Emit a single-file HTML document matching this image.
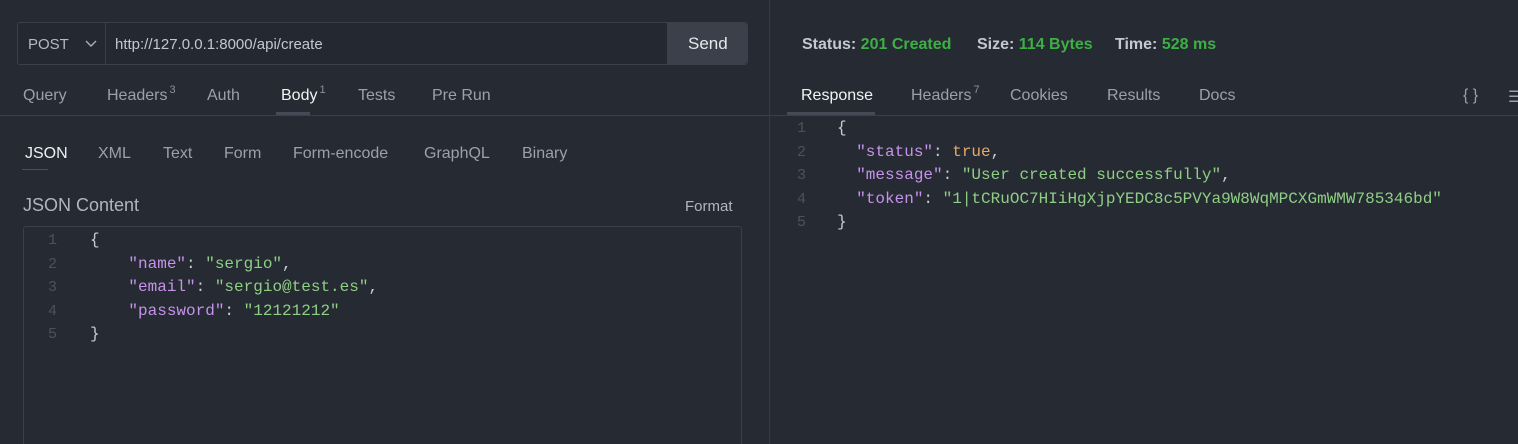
<!DOCTYPE html>
<html><head><style>
*{margin:0;padding:0;box-sizing:border-box}
html,body{width:1518px;height:444px;overflow:hidden}
body{background:#262a33;font-family:"Liberation Sans",sans-serif;color:#a6acb6;position:relative}
.a{position:absolute;white-space:nowrap}
.t{font-size:16px;color:#9aa1ab}
.mono{font-family:"Liberation Mono",monospace;font-size:16px;white-space:pre}
.mono div{white-space:pre}
.ln{color:#4c525d;font-family:"Liberation Mono",monospace;font-size:15px}
.k{color:#c792ea}.s{color:#8fcf85}.p{color:#c9ccd2}.b{color:#e8a86a}
sup{font-size:11px;vertical-align:top;position:relative;top:-3px;margin-left:2px;color:#8a919c}
</style></head><body>
<div class="a" style="left:769px;top:0;width:1px;height:444px;background:#353a44"></div>
<div class="a" style="left:17px;top:22px;width:731px;height:43px;border:1px solid #3a3f49;border-radius:3px;background:#242831"></div>
<div class="a" style="left:105px;top:23px;width:1px;height:41px;background:#3a3f49"></div>
<div class="a t" style="left:28px;top:36px;font-size:15px;color:#b4bac3">POST</div>
<svg class="a" style="left:85px;top:40px" width="12" height="8"><path d="M1 1l5 5 5-5" stroke="#aab0ba" stroke-width="1.4" fill="none"/></svg>
<div class="a t" style="left:115px;top:36px;font-size:15px;color:#c3c8cf">http://127.0.0.1:8000/api/create</div>
<div class="a" style="left:667px;top:23px;width:80px;height:41px;background:#3b404a;border-radius:0 3px 3px 0"></div>
<div class="a" style="left:688px;top:34px;font-size:17px;color:#e6e8eb">Send</div>
<div class="a t" style="left:23px;top:87px">Query</div>
<div class="a t" style="left:107px;top:87px">Headers<sup>3</sup></div>
<div class="a t" style="left:207px;top:87px">Auth</div>
<div class="a t" style="left:281px;top:87px;color:#f2f3f5">Body<sup>1</sup></div>
<div class="a t" style="left:358px;top:87px">Tests</div>
<div class="a t" style="left:432px;top:87px">Pre Run</div>
<div class="a" style="left:0;top:115px;width:769px;height:1px;background:#3a3f49"></div>
<div class="a" style="left:276px;top:112px;width:34px;height:3px;background:#454b56"></div>
<div class="a t" style="left:25px;top:145px;color:#eef0f2">JSON</div>
<div class="a" style="left:22px;top:169px;width:26px;height:1px;background:#4a505b"></div>
<div class="a t" style="left:98px;top:145px">XML</div>
<div class="a t" style="left:163px;top:145px">Text</div>
<div class="a t" style="left:224px;top:145px">Form</div>
<div class="a t" style="left:293px;top:145px">Form-encode</div>
<div class="a t" style="left:424px;top:145px">GraphQL</div>
<div class="a t" style="left:522px;top:145px">Binary</div>
<div class="a t" style="left:23px;top:195px;font-size:18px;color:#b0b6bf">JSON Content</div>
<div class="a t" style="left:685px;top:198px;font-size:15px;color:#b0b6bf">Format</div>
<div class="a" style="left:23px;top:226px;width:719px;height:230px;border:1px solid #3a3f49;border-radius:3px"></div>
<div class="a" style="left:48px;top:229px;line-height:23.5px">
<div class="ln">1</div><div class="ln">2</div><div class="ln">3</div><div class="ln">4</div><div class="ln">5</div></div>
<div class="a mono" style="left:90px;top:229px;line-height:23.5px;color:#c9ccd2"><div>{</div><div>    <span class="k">"name"</span>: <span class="s">"sergio"</span>,</div><div>    <span class="k">"email"</span>: <span class="s">"sergio@test.es"</span>,</div><div>    <span class="k">"password"</span>: <span class="s">"12121212"</span></div><div>}</div></div>
<div class="a" style="left:802px;top:36px;font-size:16px;font-weight:bold;color:#c4c9d0">Status: <span style="color:#3cb043">201 Created</span></div>
<div class="a" style="left:977px;top:36px;font-size:16px;font-weight:bold;color:#c4c9d0">Size: <span style="color:#3cb043">114 Bytes</span></div>
<div class="a" style="left:1115px;top:36px;font-size:16px;font-weight:bold;color:#c4c9d0">Time: <span style="color:#3cb043">528 ms</span></div>
<div class="a t" style="left:801px;top:87px;color:#f2f3f5">Response</div>
<div class="a t" style="left:911px;top:87px">Headers<sup>7</sup></div>
<div class="a t" style="left:1010px;top:87px">Cookies</div>
<div class="a t" style="left:1107px;top:87px">Results</div>
<div class="a t" style="left:1199px;top:87px">Docs</div>
<div class="a t" style="left:1463px;top:87px">{ }</div>
<div class="a t" style="left:1508px;top:87px">☰</div>
<div class="a" style="left:770px;top:115px;width:748px;height:1px;background:#3a3f49"></div>
<div class="a" style="left:787px;top:112px;width:88px;height:3px;background:#454b56"></div>
<div class="a" style="left:797px;top:117px;line-height:23.5px">
<div class="ln">1</div><div class="ln">2</div><div class="ln">3</div><div class="ln">4</div><div class="ln">5</div></div>
<div class="a mono" style="left:837px;top:117px;line-height:23.5px;color:#c9ccd2"><div>{</div><div>  <span class="k">"status"</span>: <span class="b">true</span>,</div><div>  <span class="k">"message"</span>: <span class="s">"User created successfully"</span>,</div><div>  <span class="k">"token"</span>: <span class="s">"1|tCRuOC7HIiHgXjpYEDC8c5PVYa9W8WqMPCXGmWMW785346bd"</span></div><div>}</div></div>
</body></html>
